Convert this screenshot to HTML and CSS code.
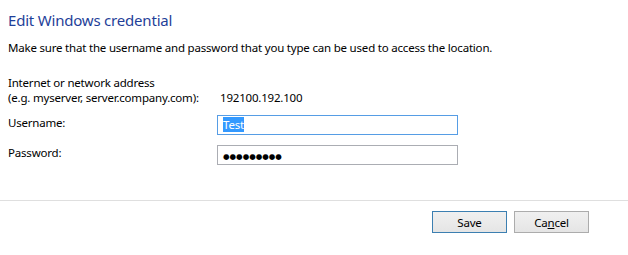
FILE: index.html
```html
<!DOCTYPE html>
<html lang="en">
<head>
  <meta charset="UTF-8">
  <title>Edit Windows credential</title>
  <link rel="stylesheet" href="styles.css">
</head>
<body>

<div class="dialog">
  <div class="content">
    <h1 class="title">Edit Windows credential</h1>
    <p class="desc">Make sure that the username and password that you type can be used to access the location.</p>

    <div class="fields">
      <div class="label">Internet or network address<br>(e.g. myserver, server.company.com):</div>
      <div class="value">192100.192.100</div>

      <div class="label">Username:</div>
      <div class="field focused"><span class="selected">Test</span></div>

      <div class="label">Password:</div>
      <div class="field"><span class="dots">●●●●●●●●●</span></div>
    </div>
  </div>

  <div class="footer">
    <button class="button default">Save</button>
    <button class="button">Ca<u>n</u>cel</button>
  </div>
</div>

</body>
</html>
```

FILE: styles.css
```css
* {
  margin: 0;
  padding: 0;
  box-sizing: border-box;
}

body {
  background-color: #ffffff;
  font-family: "Noto Sans", sans-serif;
  font-size: 11.5px;
  letter-spacing: -0.2px;
  color: #000;
  width: 628px;
  height: 255px;
  overflow: hidden;
}

.content {
  padding: 10px 0 0 8px;
  height: 200px;
}

.title {
  font-size: 15px;
  font-weight: normal;
  line-height: 20px;
  color: #1f3f99;
}

.desc {
  margin-top: 10px;
  line-height: 15px;
}

.fields {
  display: grid;
  grid-template-columns: 209px 241px;
  row-gap: 10px;
  margin-top: 20px;
  line-height: 15px;
}

.value {
  align-self: end;
  padding-left: 3px;
}

.field {
  height: 20px;
  border: 1px solid #abadb3;
  padding-left: 5px;
  line-height: 18px;
}

.field.focused {
  border-color: #569de5;
}

.selected {
  background-color: #3399ff;
  color: #fff;
}

.dots {
  font-family: "DejaVu Sans", sans-serif;
  font-size: 7.5px;
  letter-spacing: 0;
}

.footer {
  border-top: 1px solid #dfdfdf;
  display: flex;
  justify-content: flex-end;
  gap: 7px;
  padding: 10px 39px 0 0;
}

.button {
  width: 75px;
  height: 22px;
  font-family: inherit;
  font-size: 11.5px;
  letter-spacing: -0.2px;
  color: #000;
  background: linear-gradient(#f0f0f0, #e5e5e5);
  border: 1px solid #acacac;
}

.button.default {
  border-color: #3c7fb1;
}
```
